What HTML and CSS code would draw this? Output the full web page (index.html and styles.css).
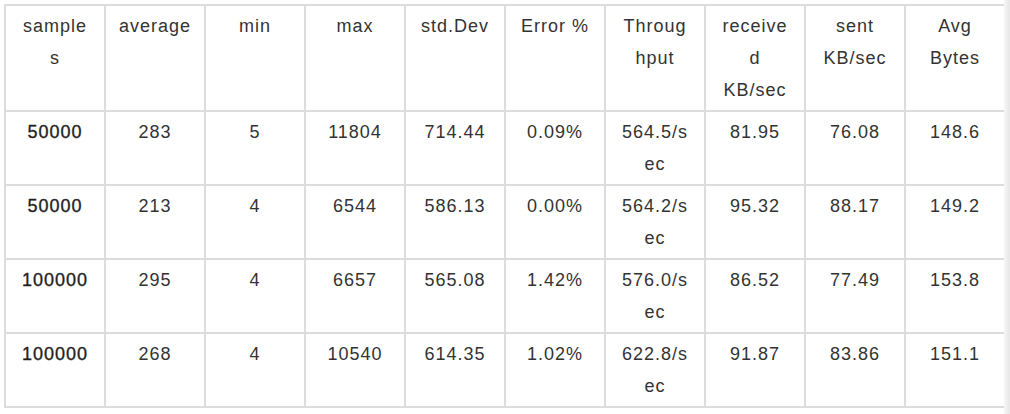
FILE: index.html
```html
<!DOCTYPE html>
<html>
<head>
<meta charset="utf-8">
<link rel="stylesheet" href="styles.css">
</head>
<body>
<div class="wrap">
<table class="report">
<colgroup>
<col class="c"><col class="c"><col class="c"><col class="c"><col class="c"><col class="c"><col class="c"><col class="c"><col class="c"><col class="c">
</colgroup>
<thead>
<tr><th>samples</th><th>average</th><th>min</th><th>max</th><th>std.Dev</th><th>Error %</th><th>Throughput</th><th>received KB/sec</th><th>sent KB/sec</th><th>Avg Bytes</th></tr>
</thead>
<tbody>
<tr><td class="first">50000</td><td>283</td><td>5</td><td>11804</td><td>714.44</td><td>0.09%</td><td>564.5/sec</td><td>81.95</td><td>76.08</td><td>148.6</td></tr>
<tr><td class="first">50000</td><td>213</td><td>4</td><td>6544</td><td>586.13</td><td>0.00%</td><td>564.2/sec</td><td>95.32</td><td>88.17</td><td>149.2</td></tr>
<tr><td class="first">100000</td><td>295</td><td>4</td><td>6657</td><td>565.08</td><td>1.42%</td><td>576.0/sec</td><td>86.52</td><td>77.49</td><td>153.8</td></tr>
<tr><td class="first">100000</td><td>268</td><td>4</td><td>10540</td><td>614.35</td><td>1.02%</td><td>622.8/sec</td><td>91.87</td><td>83.86</td><td>151.1</td></tr>
</tbody>
</table>
</div>
</body>
</html>
```
FILE: styles.css
```css
html, body {
  margin: 0;
  padding: 0;
  background: #ffffff;
}
.wrap {
  position: relative;
  padding: 4px 0 0 4px;
  height: 410px;
  overflow: hidden;
}
.wrap::after {
  content: "";
  position: absolute;
  top: 0;
  right: 0;
  width: 6px;
  height: 100%;
  background: linear-gradient(to left, #e6e6e6, #f7f7f7);
}
.report {
  border-collapse: collapse;
  table-layout: fixed;
  width: 1000px;
  font-family: "Liberation Sans", Arial, sans-serif;
  font-size: 18px;
  letter-spacing: 1px;
  line-height: 32px;
  color: #333333;
}
.c {
  width: 100px;
}
.report th,
.report td {
  border: 2px solid #dcdcdc;
  padding: 4px 12.5px;
  text-align: center;
  vertical-align: top;
  font-weight: normal;
  overflow-wrap: anywhere;
}
.report td.first {
  color: #1f1f1f;
  -webkit-text-stroke: 0.35px #1f1f1f;
}
```
